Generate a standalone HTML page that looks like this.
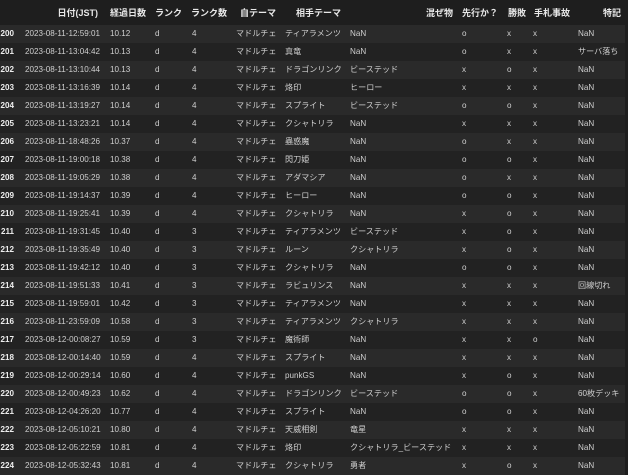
<!DOCTYPE html>
<html><head><meta charset="utf-8"><style>
body{margin:0;width:628px;height:475px;background:#1e1e1e;overflow:hidden;font-family:"Liberation Sans","Noto Sans CJK JP",sans-serif;font-size:8.1px;color:#cfcfcf}
.r{position:relative;width:625px;height:18px;line-height:18px;white-space:nowrap}
.h{height:25px;line-height:25px;background:#1e1e1e;font-weight:bold;font-size:9px;color:#e8e8e8}
.r:nth-child(even){background:#2a2a2a}
.r:nth-child(odd){background:#222}
.r.h{background:#1e1e1e}
.r span{position:absolute;top:0}
.i{right:611px;font-weight:bold;color:#eee}
.a{left:25px}.b{left:110px}.c{left:155px}.d{left:192px}.e{left:236px}.f{left:285px}.g{left:350px}.k{left:462px}.l{left:507px}.m{left:533px}.n{left:578px}
.h span{top:1px}
</style></head><body>
<div class="r h"><span style="right:527px">日付(JST)</span><span style="left:110px">経過日数</span><span style="left:155px">ランク</span><span style="left:191px">ランク数</span><span style="left:240px">自テーマ</span><span style="left:296px">相手テーマ</span><span style="left:426px">混ぜ物</span><span style="left:462px">先行か？</span><span style="left:508px">勝敗</span><span style="left:534px">手札事故</span><span style="left:603px">特記</span></div>
<div class="r"><span class="i">200</span><span class="a">2023-08-11-12:59:01</span><span class="b">10.12</span><span class="c">d</span><span class="d">4</span><span class="e">マドルチェ</span><span class="f">ティアラメンツ</span><span class="g">NaN</span><span class="k">o</span><span class="l">x</span><span class="m">x</span><span class="n">NaN</span></div>
<div class="r"><span class="i">201</span><span class="a">2023-08-11-13:04:42</span><span class="b">10.13</span><span class="c">d</span><span class="d">4</span><span class="e">マドルチェ</span><span class="f">真竜</span><span class="g">NaN</span><span class="k">o</span><span class="l">x</span><span class="m">x</span><span class="n">サーバ落ち</span></div>
<div class="r"><span class="i">202</span><span class="a">2023-08-11-13:10:44</span><span class="b">10.13</span><span class="c">d</span><span class="d">4</span><span class="e">マドルチェ</span><span class="f">ドラゴンリンク</span><span class="g">ビーステッド</span><span class="k">x</span><span class="l">o</span><span class="m">x</span><span class="n">NaN</span></div>
<div class="r"><span class="i">203</span><span class="a">2023-08-11-13:16:39</span><span class="b">10.14</span><span class="c">d</span><span class="d">4</span><span class="e">マドルチェ</span><span class="f">烙印</span><span class="g">ヒーロー</span><span class="k">x</span><span class="l">x</span><span class="m">x</span><span class="n">NaN</span></div>
<div class="r"><span class="i">204</span><span class="a">2023-08-11-13:19:27</span><span class="b">10.14</span><span class="c">d</span><span class="d">4</span><span class="e">マドルチェ</span><span class="f">スプライト</span><span class="g">ビーステッド</span><span class="k">o</span><span class="l">o</span><span class="m">x</span><span class="n">NaN</span></div>
<div class="r"><span class="i">205</span><span class="a">2023-08-11-13:23:21</span><span class="b">10.14</span><span class="c">d</span><span class="d">4</span><span class="e">マドルチェ</span><span class="f">クシャトリラ</span><span class="g">NaN</span><span class="k">x</span><span class="l">x</span><span class="m">x</span><span class="n">NaN</span></div>
<div class="r"><span class="i">206</span><span class="a">2023-08-11-18:48:26</span><span class="b">10.37</span><span class="c">d</span><span class="d">4</span><span class="e">マドルチェ</span><span class="f">蟲惑魔</span><span class="g">NaN</span><span class="k">o</span><span class="l">x</span><span class="m">x</span><span class="n">NaN</span></div>
<div class="r"><span class="i">207</span><span class="a">2023-08-11-19:00:18</span><span class="b">10.38</span><span class="c">d</span><span class="d">4</span><span class="e">マドルチェ</span><span class="f">閃刀姫</span><span class="g">NaN</span><span class="k">o</span><span class="l">o</span><span class="m">x</span><span class="n">NaN</span></div>
<div class="r"><span class="i">208</span><span class="a">2023-08-11-19:05:29</span><span class="b">10.38</span><span class="c">d</span><span class="d">4</span><span class="e">マドルチェ</span><span class="f">アダマシア</span><span class="g">NaN</span><span class="k">o</span><span class="l">x</span><span class="m">x</span><span class="n">NaN</span></div>
<div class="r"><span class="i">209</span><span class="a">2023-08-11-19:14:37</span><span class="b">10.39</span><span class="c">d</span><span class="d">4</span><span class="e">マドルチェ</span><span class="f">ヒーロー</span><span class="g">NaN</span><span class="k">o</span><span class="l">o</span><span class="m">x</span><span class="n">NaN</span></div>
<div class="r"><span class="i">210</span><span class="a">2023-08-11-19:25:41</span><span class="b">10.39</span><span class="c">d</span><span class="d">4</span><span class="e">マドルチェ</span><span class="f">クシャトリラ</span><span class="g">NaN</span><span class="k">x</span><span class="l">o</span><span class="m">x</span><span class="n">NaN</span></div>
<div class="r"><span class="i">211</span><span class="a">2023-08-11-19:31:45</span><span class="b">10.40</span><span class="c">d</span><span class="d">3</span><span class="e">マドルチェ</span><span class="f">ティアラメンツ</span><span class="g">ビーステッド</span><span class="k">x</span><span class="l">o</span><span class="m">x</span><span class="n">NaN</span></div>
<div class="r"><span class="i">212</span><span class="a">2023-08-11-19:35:49</span><span class="b">10.40</span><span class="c">d</span><span class="d">3</span><span class="e">マドルチェ</span><span class="f">ルーン</span><span class="g">クシャトリラ</span><span class="k">x</span><span class="l">o</span><span class="m">x</span><span class="n">NaN</span></div>
<div class="r"><span class="i">213</span><span class="a">2023-08-11-19:42:12</span><span class="b">10.40</span><span class="c">d</span><span class="d">3</span><span class="e">マドルチェ</span><span class="f">クシャトリラ</span><span class="g">NaN</span><span class="k">o</span><span class="l">o</span><span class="m">x</span><span class="n">NaN</span></div>
<div class="r"><span class="i">214</span><span class="a">2023-08-11-19:51:33</span><span class="b">10.41</span><span class="c">d</span><span class="d">3</span><span class="e">マドルチェ</span><span class="f">ラビュリンス</span><span class="g">NaN</span><span class="k">x</span><span class="l">x</span><span class="m">x</span><span class="n">回線切れ</span></div>
<div class="r"><span class="i">215</span><span class="a">2023-08-11-19:59:01</span><span class="b">10.42</span><span class="c">d</span><span class="d">3</span><span class="e">マドルチェ</span><span class="f">ティアラメンツ</span><span class="g">NaN</span><span class="k">x</span><span class="l">x</span><span class="m">x</span><span class="n">NaN</span></div>
<div class="r"><span class="i">216</span><span class="a">2023-08-11-23:59:09</span><span class="b">10.58</span><span class="c">d</span><span class="d">3</span><span class="e">マドルチェ</span><span class="f">ティアラメンツ</span><span class="g">クシャトリラ</span><span class="k">x</span><span class="l">x</span><span class="m">x</span><span class="n">NaN</span></div>
<div class="r"><span class="i">217</span><span class="a">2023-08-12-00:08:27</span><span class="b">10.59</span><span class="c">d</span><span class="d">3</span><span class="e">マドルチェ</span><span class="f">魔術師</span><span class="g">NaN</span><span class="k">x</span><span class="l">x</span><span class="m">o</span><span class="n">NaN</span></div>
<div class="r"><span class="i">218</span><span class="a">2023-08-12-00:14:40</span><span class="b">10.59</span><span class="c">d</span><span class="d">4</span><span class="e">マドルチェ</span><span class="f">スプライト</span><span class="g">NaN</span><span class="k">x</span><span class="l">x</span><span class="m">x</span><span class="n">NaN</span></div>
<div class="r"><span class="i">219</span><span class="a">2023-08-12-00:29:14</span><span class="b">10.60</span><span class="c">d</span><span class="d">4</span><span class="e">マドルチェ</span><span class="f">punkGS</span><span class="g">NaN</span><span class="k">x</span><span class="l">o</span><span class="m">x</span><span class="n">NaN</span></div>
<div class="r"><span class="i">220</span><span class="a">2023-08-12-00:49:23</span><span class="b">10.62</span><span class="c">d</span><span class="d">4</span><span class="e">マドルチェ</span><span class="f">ドラゴンリンク</span><span class="g">ビーステッド</span><span class="k">o</span><span class="l">o</span><span class="m">x</span><span class="n">60枚デッキ</span></div>
<div class="r"><span class="i">221</span><span class="a">2023-08-12-04:26:20</span><span class="b">10.77</span><span class="c">d</span><span class="d">4</span><span class="e">マドルチェ</span><span class="f">スプライト</span><span class="g">NaN</span><span class="k">o</span><span class="l">o</span><span class="m">x</span><span class="n">NaN</span></div>
<div class="r"><span class="i">222</span><span class="a">2023-08-12-05:10:21</span><span class="b">10.80</span><span class="c">d</span><span class="d">4</span><span class="e">マドルチェ</span><span class="f">天威相剣</span><span class="g">竜星</span><span class="k">x</span><span class="l">x</span><span class="m">x</span><span class="n">NaN</span></div>
<div class="r"><span class="i">223</span><span class="a">2023-08-12-05:22:59</span><span class="b">10.81</span><span class="c">d</span><span class="d">4</span><span class="e">マドルチェ</span><span class="f">烙印</span><span class="g">クシャトリラ_ビーステッド</span><span class="k">x</span><span class="l">x</span><span class="m">x</span><span class="n">NaN</span></div>
<div class="r"><span class="i">224</span><span class="a">2023-08-12-05:32:43</span><span class="b">10.81</span><span class="c">d</span><span class="d">4</span><span class="e">マドルチェ</span><span class="f">クシャトリラ</span><span class="g">勇者</span><span class="k">x</span><span class="l">o</span><span class="m">x</span><span class="n">NaN</span></div>
</body></html>
